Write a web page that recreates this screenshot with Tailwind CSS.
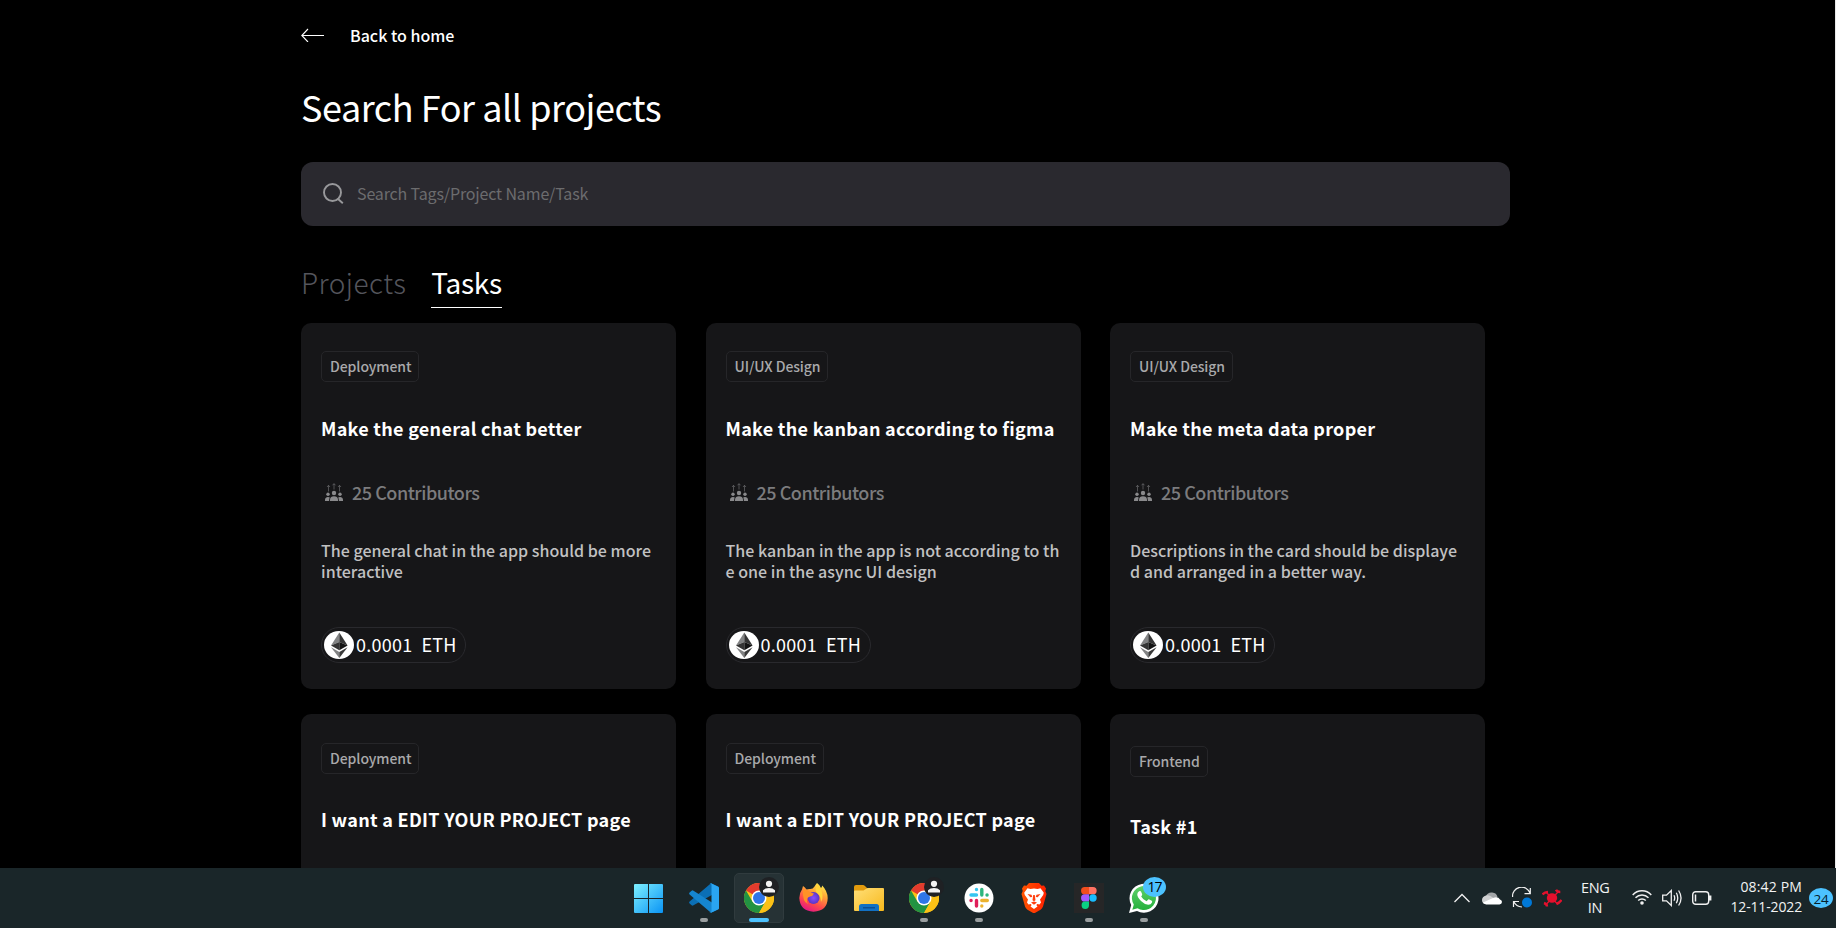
<!DOCTYPE html>
<html lang="en">
<head>
<meta charset="utf-8">
<title>Search For all projects</title>
<script src="https://cdn.jsdelivr.net/npm/@tailwindcss/browser@4"></script>
</head>
<body class="bg-black text-white font-['Noto_Sans_CJK_JP','Noto_Sans_CJK_SC',sans-serif]">
<svg class="absolute h-0 w-0">
  <defs>
    <linearGradient id="win" x1="0" y1="0" x2="1" y2="1"><stop offset="0" stop-color="#7df0ff"/><stop offset="1" stop-color="#0a94f5"/></linearGradient>
    <linearGradient id="folder" x1="0" y1="0" x2="1" y2="1"><stop offset="0" stop-color="#ffdf78"/><stop offset="1" stop-color="#f8b91c"/></linearGradient>
    <linearGradient id="fox" x1=".8" y1="0" x2=".3" y2="1"><stop offset="0" stop-color="#fff44f"/><stop offset=".35" stop-color="#ffa436"/><stop offset=".7" stop-color="#ff4a4a"/><stop offset="1" stop-color="#e31587"/></linearGradient>
    <radialGradient id="globe"><stop offset="0" stop-color="#8a4bff"/><stop offset="1" stop-color="#5b36c4"/></radialGradient>
    <linearGradient id="lion" x1="0" y1="0" x2="1" y2="0"><stop offset="0" stop-color="#ff5500"/><stop offset="1" stop-color="#ff2000"/></linearGradient>
    <linearGradient id="wa" x1="0" y1="0" x2="0" y2="1"><stop offset="0" stop-color="#5fd16b"/><stop offset="1" stop-color="#25b03c"/></linearGradient>
  </defs>
  <symbol id="people" viewBox="0 0 18 18">
    <g fill="#8a8a8c"><circle cx="9" cy="10" r="2.2"/><path d="M5 18v-1.5Q5.400 13.200 9 13.200T13 16.500V18z"/>
    <circle cx="3" cy="11.300" r="1.700"/><path d="M0 18v-1.200Q.3 14 3 14q1.200 0 1.800.6Q4.100 15.800 4.100 18z"/>
    <circle cx="15" cy="11.300" r="1.700"/><path d="M18 18v-1.200Q17.700 14 15 14q-1.200 0-1.800.6.700 1.200.7 3.400z"/></g>
    <path d="M3.500 8.500V2.500M2 4l1.500-1.700L5 4M9 6.500V.8M7.500 2.300L9 .6l1.500 1.700M14.500 8.500V2.500M13 4l1.500-1.700L16 4" stroke="#7a7a7c" stroke-width=".6" fill="none"/>
  </symbol>
  <symbol id="eth" viewBox="0 0 30 28" preserveAspectRatio="none">
    <ellipse cx="15" cy="14" rx="15" ry="14" fill="#fff"/>
    <path d="M15.300 1.500V11L7 14.500z" fill="#828384"/><path d="M15.300 1.500V11l8.300 3.500z" fill="#343434"/>
    <path d="M7 14.500L15.300 11v8.300z" fill="#343434"/><path d="M23.600 14.500L15.300 11v8.300z" fill="#131313"/>
    <path d="M7 16.200l8.300 4.700v6z" fill="#828384"/><path d="M23.600 16.200l-8.300 4.700v6z" fill="#3a3a3a"/>
  </symbol>
  <symbol id="chrome" viewBox="0 0 30 30">
    <circle cx="15" cy="15" r="15" fill="#fbc116"/>
    <path d="M15 15L2 7.500A15 15 0 0 1 28 7.500H15z" fill="#e33b2e"/>
    <path d="M2 7.500A15 15 0 0 0 15 30l6.500-11.200L15 15 8.500 18.750z" fill="#229342"/>
    <path d="M28 7.500H15v7.500l6.500 3.750L15 30A15 15 0 0 0 28 7.500z" fill="#fbc116"/>
    <circle cx="15" cy="15" r="7.500" fill="#fff"/><circle cx="15" cy="15" r="6" fill="#2f76e8"/>
  </symbol>
  <symbol id="avatar" viewBox="0 0 20 20">
    <circle cx="10" cy="10" r="10" fill="#1f2124"/><circle cx="10" cy="6.800" r="3.100" fill="#f4f4f4"/><path d="M4 15.500v-2.200Q6 10.900 10 10.900t6 2.400v2.200z" fill="#f4f4f4"/>
  </symbol>
</svg>

<div class="flex h-[928px] flex-col overflow-hidden">
  <main class="min-h-0 flex-1 overflow-hidden border-r border-[#e8e8e8] pl-[301px] pt-[23px]">
    <div class="flex h-6 items-center text-[16px] font-medium leading-6">
      <svg class="h-[14px] w-[23px]" viewBox="0 0 23 14" fill="none" stroke="#fff" stroke-width="1.100"><path d="M23 7.500H.8M7 1L.8 7.500 7 14"/></svg>
      <span class="ml-[26px]">Back to home</span>
    </div>
    <h1 class="mt-8 h-[54px] whitespace-nowrap text-[36px] font-normal leading-[54px] tracking-[-0.450px]">Search For all projects</h1>
    <div class="mt-[29px] flex h-16 w-[1209px] items-center rounded-xl bg-[#2a292f] pl-[22px]">
      <svg class="-mt-px h-[21px] w-[21px]" viewBox="0 0 21 21" fill="none" stroke="#98989b" stroke-width="1.900"><circle cx="9.500" cy="9.500" r="8.500"/><path d="M14.500 15.500l5.300 4.700"/></svg>
      <span class="ml-[13px] pb-[3px] text-[16px] leading-6 tracking-[-0.150px] text-[#6c6c6e]">Search Tags/Project Name/Task</span>
    </div>
    <div class="mt-9 flex h-[46px] gap-[25px] text-[28px] leading-10">
      <span class="font-light tracking-[0.450px] text-[#54555c]">Projects</span>
      <span class="border-b border-white tracking-[-0.300px]">Tasks</span>
    </div>
    <div id="cards" class="mt-[15px] grid w-[1184px] grid-cols-[375px_375px_375px] justify-between gap-y-[25px]"></div>
  </main>

  <footer class="flex h-[60px] shrink-0 bg-[#1a2629] font-['Open_Sans','Noto_Sans',sans-serif]">
    <div class="ml-[621px] flex">
      <div class="flex w-[55px] justify-center pt-4">
        <svg class="h-[29px] w-[29px]" viewBox="0 0 29 29"><path fill="url(#win)" d="M1 0H14V14H0V1Q0 0 1 0zM15 0H28Q29 0 29 1V14H15zM0 15H14V29H1Q0 29 0 28zM15 15H29V28Q29 29 28 29H15z"/></svg>
      </div>
      <div class="flex w-[55px] flex-col items-center pt-[15px]">
        <svg class="h-[30px] w-[30px]" viewBox="0 0 30 30"><path fill="#0b6fb5" d="M22 .3L30 4v4L4.500 22.300Q3.500 23 2.600 22.200L.6 20.400Q-.4 19.400.6 18.500z"/><path fill="#1585cf" d="M.6 11.500Q-.4 10.600.6 9.600L2.600 7.800Q3.500 7 4.500 7.700L30 24v2l-8 3.700z"/><path fill="#2aa5f2" d="M22 .3L28.800 3.500Q30 4.100 30 5.300V24.700Q30 25.900 28.800 26.500L22 29.700Q21 30 20.500 29.500 22.500 30 22.500 28V2Q22.500 0 20.500.5 21.200 0 22 .3z"/></svg>
        <span class="mt-[5px] h-1 w-2 rounded-full bg-[#9a9fa0]"></span>
      </div>
      <div class="relative flex w-[55px] flex-col items-center pt-[15px]">
        <div class="absolute left-[3px] top-[5px] h-[50px] w-[50px] rounded-[5px] border border-[#303b3e] bg-[#263235]"></div>
        <svg class="relative h-[30px] w-[30px]"><use href="#chrome"/></svg>
        <svg class="absolute left-[28px] top-[9px] h-5 w-5"><use href="#avatar"/></svg>
        <span class="relative mt-[5px] h-1 w-5 rounded-full bg-[#4cc2ff]"></span>
      </div>
      <div class="flex w-[55px] justify-center pt-[15px]">
        <svg class="h-[29px] w-[29px]" viewBox="0 0 29 29"><path fill="url(#fox)" d="M18 0q3 2 4 5 1-1 1.200-2.500Q28.500 8 28.700 15 28.500 28 14.500 28.700 1 28 .3 15 .3 10 3 6.500L4 3q2 1 3.500 3.500 2-.8 3.800-.5Q14 6 15.500 3.500 16.500 1.500 18 0z"/><circle cx="14.500" cy="15" r="6" fill="url(#globe)"/><path fill="#ff9226" d="M4 7q3-1.500 5 .8 2.500 2.500 6 2.700-1 2.500-4 3-2.500.5-3 2.500-.8 3 1.500 5.200Q3 19 4 7z"/><path fill="#ffd43a" d="M18 1q5 5 5.500 11 .5 4-1.500 7 0-6-3.500-8.500Q15 8 18 1z"/></svg>
      </div>
      <div class="flex w-[55px] justify-center pt-[17px]">
        <svg class="h-[26px] w-[30px]" viewBox="0 0 30 26"><path fill="#e29b0d" d="M0 8V2Q0 0 2 0H9Q10 0 11 1L13 3V8z"/><path fill="url(#folder)" d="M0 6.500Q0 5.500 1 5.500H9.500L13.500 3H29Q30 3 30 4V25Q30 26 29 26H1Q0 26 0 25z"/><path fill="#1271c4" d="M5 26V21.500Q5 19 7.500 19H22.500Q25 19 25 21.500V26z"/><path fill="#0b4f94" d="M9 22H21V23.500H9z"/></svg>
      </div>
      <div class="relative flex w-[55px] flex-col items-center pt-[15px]">
        <svg class="h-[30px] w-[30px]"><use href="#chrome"/></svg>
        <svg class="absolute left-[28px] top-[9px] h-5 w-5"><use href="#avatar"/></svg>
        <span class="mt-[5px] h-1 w-2 rounded-full bg-[#9a9fa0]"></span>
      </div>
      <div class="flex w-[55px] flex-col items-center pt-[15px]">
        <svg class="h-[30px] w-[30px]" viewBox="0 0 30 30"><circle cx="15" cy="15" r="14.500" fill="#fff"/><g stroke-width="3.400" stroke-linecap="round"><path stroke="#36c5f0" d="M7 12h5.500M12.500 6.500v.1"/><path stroke="#2eb67d" d="M17.800 6.500v5.500M23 12h.1"/><path stroke="#ecb22e" d="M17.800 17.500h5.500M17.800 23v.1"/><path stroke="#e01e5a" d="M12.500 17.500v5.500M7 17.500h.1"/></g></svg>
        <span class="mt-[5px] h-1 w-2 rounded-full bg-[#9a9fa0]"></span>
      </div>
      <div class="flex w-[55px] justify-center pt-[15px]">
        <svg class="h-[30px] w-[26px]" viewBox="0 0 26 30"><path fill="url(#lion)" d="M8 0H18L20.500 2.800 23 2.500 25 5.500 24.300 8 25.500 11 22 23.500Q21.300 25.500 19.500 26.700L13 30.500 6.500 26.700Q4.700 25.500 4 23.500L.5 11 1.700 8 1 5.500 3 2.500 5.500 2.800z"/><path fill="#fff" d="M13 5.500l3.500.4 3-.7 3.300 4.500-.6 2.300-3.200 4.500 1 3-1.500 2-2.500-.5-.5 1.200 1 1.300L13 26l-3.500-2.500 1-1.300-.5-1.200-2.500.5-1.500-2 1-3L3.800 12l-.6-2.300 3.300-4.500 3 .7z"/><path fill="#ff4010" d="M6.500 11l4 .8.8 2.200-2 .2zM19.500 11l-4 .8-.8 2.200 2 .2zM12.200 12h1.600l.7 5.200L13 18.300l-1.500-1.100zM10 19.500l3-1 3 1-3 2.200z"/></svg>
      </div>
      <div class="flex w-[55px] flex-col items-center pt-[15px]">
        <svg class="h-[30px] w-[30px]" viewBox="0 0 30 30"><path fill="#262627" d="M0 0H30V30H0z"/><path fill="#f24e1e" d="M15 4v7.300h-4.300a3.650 3.650 0 0 1 0-7.300z"/><path fill="#ff7262" d="M15 4h4a3.650 3.650 0 0 1 0 7.300h-4z"/><path fill="#a259ff" d="M15 11.300v7.300h-4.300a3.650 3.650 0 0 1 0-7.300z"/><circle cx="19" cy="15" r="3.700" fill="#1abcfe"/><path fill="#0acf83" d="M15 18.600v3.700a3.700 3.700 0 1 1-4-3.700z"/></svg>
        <span class="mt-[5px] h-1 w-2 rounded-full bg-[#9a9fa0]"></span>
      </div>
      <div class="relative flex w-[55px] flex-col items-center pt-[15px]">
        <svg class="h-[30px] w-[30px]" viewBox="0 0 30 30"><path fill="#fff" d="M0 30L2.200 22A14.500 14.500 0 1 1 8 27.900z"/><path fill="url(#wa)" d="M3.300 26.700L4.800 21.500A12 12 0 1 1 8.500 25.200z"/><path fill="#fff" d="M10.500 8Q11.600 7.600 12 8.500L13.200 11.300Q13.400 12 12.200 13.500 14 16.800 17.600 18.300L19.200 16.500Q19.700 16.200 20.300 16.500L22.800 17.800Q23.400 18.200 23 19.600 22 21.800 19.300 21.800 15.500 21.500 12 18 8 14 8.300 11 8.600 9 10.500 8z"/></svg>
        <span class="mt-[5px] h-1 w-2 rounded-full bg-[#9a9fa0]"></span>
        <span class="absolute left-[27px] top-[9px] flex h-5 w-[23px] items-center justify-center rounded-[50%] bg-[#4cc2ff] text-[14px] leading-5 tracking-[-1px] text-black">17</span>
      </div>
    </div>
    <div class="ml-auto flex items-start pr-[3px] text-[#f2f3f3]">
      <svg class="mt-[25px] h-[10px] w-4" viewBox="0 0 16 10" fill="none" stroke="#f0f0f0" stroke-width="1.300"><path d="M.5 9L8 1.500 15.500 9"/></svg>
      <svg class="ml-3 mt-[23px] h-[14px] w-5" viewBox="0 0 20 14"><path fill="#a3a6a8" d="M4 5a6 5.500 0 0 1 11.500 1L10 10 2 8z"/><path fill="#d0d1d2" d="M4 4.500q3-1 6 1.500l3 2-9 5H3Q0 12 0 9 0 5.500 4 4.500z"/><path fill="#fff" d="M3 13Q1.500 12.500 1 11.500L11 7q5-2 7 1.500 2 .5 2 2.500-.2 2-2.500 2.500H4z"/></svg>
      <svg class="ml-[10px] mt-[19px] h-[21px] w-5" viewBox="0 0 20 21" fill="none" stroke="#f0f0f0" stroke-width="1.200"><path d="M.6 10A9 9 0 0 1 18 6M18.300 1V6.600H12.500M1.500 20V14.500H7M2 15Q4 19.500 10 20"/><circle cx="15" cy="15.500" r="5" fill="#0078d7" stroke="none"/></svg>
      <svg class="ml-[10px] mt-[21px] h-[18px] w-5" viewBox="0 0 20 18"><ellipse cx="10" cy="9" rx="5.200" ry="4.800" fill="#e5102d"/><g fill="none" stroke="#e5102d"><path stroke-width="1.300" d="M4 3L15.500 15M16 3L4.500 15"/><path stroke-width="2.400" d="M.5 5.500Q2.500 3.200 6 3M14 .8Q15 3 18.300 3M5 17.500Q5 15 2 14M14.500 15Q17.500 14 19.500 11"/></g></svg>
      <div class="ml-[19px] mt-[10px] w-7 whitespace-nowrap text-center text-[14.5px] leading-5 tracking-[-0.300px]"><div>ENG</div><div>IN</div></div>
      <svg class="ml-[23px] mt-[21px] h-4 w-5" viewBox="0 0 20 16" fill="none" stroke="#f0f0f0" stroke-width="1.500"><path d="M.7 6A12.500 12.500 0 0 1 19.300 6M3.500 8.800A9 9 0 0 1 16.500 8.800M6.200 11.500A5.500 5.500 0 0 1 13.800 11.500"/><circle cx="10" cy="14" r="1.800" fill="#f0f0f0" stroke="none"/></svg>
      <svg class="ml-[10px] mt-[21px] h-[18px] w-5" viewBox="0 0 20 18" fill="none" stroke="#f0f0f0" stroke-width="1.300"><path d="M.7 6.200H4.500L9.300 1.500V16.500L4.500 11.800H.7zM12 6.200Q13.400 9 12 11.800M14.300 3.800Q17.200 9 14.300 14.200M16.600 1.500Q21.500 9 16.600 16.500"/></svg>
      <svg class="ml-[10px] mt-[23px] h-[14px] w-5" viewBox="0 0 20 14" fill="none" stroke="#f0f0f0" stroke-width="1.400"><rect x=".7" y=".7" width="16" height="12.600" rx="3"/><path d="M18.200 4.500V9.500" stroke-width="2.400"/><path d="M3.500 3.500V10.500" stroke-width="1.500"/></svg>
      <div class="ml-[18px] mt-[9px] w-[72px] whitespace-nowrap text-right text-[14px] leading-5"><div class="tracking-[0.150px]">08:42 PM</div><div class="tracking-[-0.150px]">12-11-2022</div></div>
      <div class="ml-[7px] mt-5 flex h-5 w-6 items-center justify-center rounded-[50%] bg-[#4cc2ff] pt-px text-[13.5px] leading-5 tracking-[-0.300px] text-[#06202c]">24</div>
    </div>
  </footer>
</div>

<script>
const tasks = [
  { tag: 'Deployment', title: 'Make the general chat better', lines: ['The general chat in the app should be more', 'interactive'] },
  { tag: 'UI/UX Design', title: 'Make the kanban according to figma', lines: ['The kanban in the app is not according to th', 'e one in the async UI design'] },
  { tag: 'UI/UX Design', title: 'Make the meta data proper', lines: ['Descriptions in the card should be displaye', 'd and arranged in a better way.'] },
  { tag: 'Deployment', title: 'I want a EDIT YOUR PROJECT page', pad: 'pt-[29px]', gap: 'mt-[31px]' },
  { tag: 'Deployment', title: 'I want a EDIT YOUR PROJECT page', pad: 'pt-[29px]', gap: 'mt-[31px]' },
  { tag: 'Frontend', title: 'Task #1', pad: 'pt-8', gap: 'mt-[35px]' },
];
document.getElementById('cards').innerHTML = tasks.map(t => `
  <article class="h-[366px] whitespace-nowrap rounded-[10px] bg-[#161618] px-5 ${t.pad || 'pt-7'}">
    <div class="flex"><span class="h-[31px] rounded-[5px] border border-[#262629] pl-2 pr-[7px] text-[14px] font-medium leading-[29px] tracking-[-0.080px] text-[#a9a9ab]">${t.tag}</span></div>
    <h2 class="${t.gap || 'mt-8'} h-7 text-[18px] font-bold leading-7 tracking-[0.290px]">${t.title}</h2>
    ${t.lines ? `
    <div class="mt-[38px] flex h-6 items-center pl-1 text-[18px] font-medium leading-6 tracking-[-0.470px] text-[#7c7c7e]">
      <svg class="h-[18px] w-[18px]"><use href="#people"/></svg><span class="ml-[9px]">25 Contributors</span>
    </div>
    <p class="mt-9 text-[16px] font-medium leading-[21px] tracking-[0.020px] text-[#c1c1c2]">${t.lines.join('<br>')}</p>
    <div class="mt-[45px] flex h-9 w-[145px] items-center rounded-full border border-[#29292d] pl-[2px] text-[18px] leading-6 tracking-[0.250px]">
      <svg class="h-7 w-[30px]"><use href="#eth"/></svg><span class="ml-[2px] pb-[2px]">0.0001</span><span class="ml-[9px] pb-[2px]">ETH</span>
    </div>` : ''}
  </article>`).join('');
</script>
</body>
</html>
